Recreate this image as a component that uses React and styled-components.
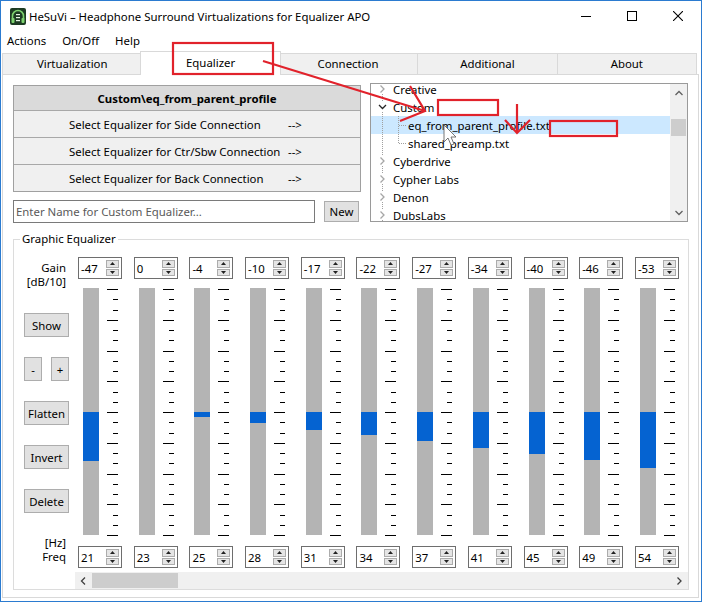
import React from 'react';
import styled, { createGlobalStyle } from 'styled-components';

const GlobalStyle = createGlobalStyle`
  html, body { margin: 0; padding: 0; background: #fff; }
  body { font-family: "Segoe UI", "Noto Sans", sans-serif; font-size: 11.4px; color: #000; }
  * { box-sizing: border-box; }
`;

const Window = styled.div`
  position: relative;
  width: 702px;
  height: 602px;
  border: 1px solid #2b7bd0;
  background: #fff;
  display: flex;
  flex-direction: column;
  overflow: hidden;
`;

const TitleBar = styled.div`
  height: 30px;
  display: flex;
  align-items: center;
  padding-left: 9px;
`;

const TitleText = styled.div`
  flex: 1;
  margin-left: 3px;
  white-space: nowrap;
`;

const CaptionButton = styled.div`
  width: 46px;
  height: 30px;
  display: flex;
  align-items: center;
  justify-content: center;
`;

const MenuBar = styled.div`
  height: 20px;
  display: flex;
  align-items: center;
  padding: 0 0 1px 6px;
  gap: 16px;
`;

const MenuItem = styled.span``;

const TabStrip = styled.div`
  height: 23px;
  display: flex;
  align-items: flex-end;
  padding: 0 4px 0 1px;
`;

const Tab = styled.div`
  flex: 1;
  height: ${p => (p.$active ? '24px' : '21px')};
  margin: ${p => (p.$active ? '0 -2px -1px -2px' : '0 0 0 -1px')};
  padding-bottom: ${p => (p.$active ? '3px' : '2px')};
  background: ${p => (p.$active ? '#fff' : '#f0f0f0')};
  border: 1px solid #d9d9d9;
  border-bottom: none;
  display: flex;
  align-items: center;
  justify-content: center;
  position: relative;
  z-index: ${p => (p.$active ? 2 : 1)};
  &:first-child { margin-left: 0; }
`;

const TabPage = styled.div`
  flex: 1;
  margin: 0 2px 3px 1px;
  border: 1px solid #d9d9d9;
  background: #fff;
  padding: 8px 9px 0 10px;
  display: flex;
  flex-direction: column;
`;

const TopRow = styled.div`
  display: flex;
  height: 139px;
`;

const LeftPanel = styled.div`
  width: 348px;
  display: flex;
  flex-direction: column;
`;

const ProfileBox = styled.div`
  margin: 2px 0 0 0;
  border: 1px solid #a0a0a0;
  display: flex;
  flex-direction: column;
`;

const ProfileHeader = styled.div`
  height: 24px;
  background: #dadada;
  font-weight: 700;
  display: flex;
  align-items: center;
  justify-content: center;
`;

const ProfileRow = styled.div`
  height: 27px;
  border-top: 1px solid #a8a8a8;
  background: #f0f0f0;
  display: grid;
  grid-template-columns: 219px auto;
  align-items: center;
  padding-left: 55px;
  white-space: nowrap;
`;

const InputRow = styled.div`
  display: flex;
  align-items: flex-start;
  margin-top: 8px;
`;

const NameInput = styled.div`
  width: 302px;
  height: 23px;
  border: 1px solid #7a7a7a;
  color: #5a5a5a;
  display: flex;
  align-items: center;
  padding-left: 2px;
  white-space: nowrap;
`;

const PushButton = styled.div`
  width: ${p => p.$w || 45}px;
  height: ${p => p.$h || 24}px;
  margin-top: ${p => p.$mt || 0}px;
  margin-left: ${p => p.$ml || 0}px;
  background: #e1e1e1;
  border: 1px solid #adadad;
  display: flex;
  align-items: center;
  justify-content: center;
  flex-shrink: 0;
`;

const TreeView = styled.div`
  width: 318px;
  margin-left: 9px;
  border: 1px solid #9a9a9a;
  display: flex;
  overflow: hidden;
`;

const TreeList = styled.div`
  flex: 1;
  overflow: hidden;
`;

const TreeInner = styled.div`
  margin-top: -4px;
`;

const TreeRow = styled.div`
  height: 18px;
  display: flex;
  align-items: center;
  white-space: nowrap;
  background: ${p => (p.$selected ? '#cce8ff' : 'transparent')};
`;

const TreeLines = styled.svg`
  flex-shrink: 0;
  display: block;
`;

const TreeLabel = styled.span`
  margin-left: ${p => p.$ml}px;
`;

const VScroll = styled.div`
  width: 17px;
  background: #f0f0f0;
  display: flex;
  flex-direction: column;
  align-items: center;
`;

const ScrollArrowBox = styled.div`
  width: 17px;
  height: 17px;
  display: flex;
  align-items: center;
  justify-content: center;
  flex-shrink: 0;
`;

const VThumb = styled.div`
  width: 15px;
  height: 17px;
  background: #cdcdcd;
  margin-top: ${p => p.$top}px;
`;

const Spacer = styled.div`
  flex: 1;
`;

const GroupBox = styled.div`
  position: relative;
  margin-top: 17px;
  height: 351px;
  border: 1px solid #dcdcdc;
  display: flex;
`;

const GroupTitle = styled.span`
  position: absolute;
  top: -9px;
  left: 6px;
  padding: 0 2px;
  line-height: 16px;
  background: #fff;
`;

const LeftColumn = styled.div`
  width: 61px;
  flex-shrink: 0;
  display: flex;
  flex-direction: column;
  padding-top: 21px;
`;

const AxisLabel = styled.div`
  text-align: right;
  padding-right: 9px;
  height: 14px;
  line-height: 14px;
  margin-top: ${p => p.$mt || 0}px;
`;

const ButtonStack = styled.div`
  display: flex;
  flex-direction: column;
  gap: 20px;
  margin: 24px 0 0 10px;
`;

const PairRow = styled.div`
  display: flex;
  gap: 9px;
`;

const ScrollArea = styled.div`
  flex: 1;
  min-width: 0;
  display: flex;
  flex-direction: column;
  overflow: hidden;
`;

const Columns = styled.div`
  flex: 1;
  display: flex;
  overflow: hidden;
  padding: 17px 0 0 3px;
`;

const Column = styled.div`
  width: 55.7px;
  flex-shrink: 0;
  display: flex;
  flex-direction: column;
`;

const SpinBox = styled.div`
  width: 44px;
  height: 22px;
  border: 1px solid #6e6e6e;
  background: #fff;
  display: flex;
  align-items: center;
  margin-top: ${p => p.$mt || 0}px;
`;

const SpinValue = styled.span`
  flex: 1;
  padding-left: 2px;
`;

const SpinButtons = styled.div`
  width: 13px;
  height: 100%;
  margin-right: 2px;
  padding: 2px 0;
  display: flex;
  flex-direction: column;
  gap: 1px;
`;

const SpinButton = styled.div`
  flex: 1;
  background: #e5e5e5;
  border: 1px solid #acacac;
  display: flex;
  align-items: center;
  justify-content: center;
`;

const SliderRow = styled.div`
  margin-top: 9px;
  height: 248px;
  display: flex;
`;

const Track = styled.div`
  position: relative;
  width: 16px;
  height: 247px;
  margin-left: 5px;
  background: #b4b4b4;
`;

const TrackFill = styled.div`
  position: absolute;
  left: 0;
  right: 0;
  top: 124px;
  background: #0563d1;
`;

const TickSvg = styled.svg`
  display: block;
  margin-left: 7px;
`;

const HScroll = styled.div`
  height: 17px;
  background: #f0f0f0;
  display: flex;
  align-items: center;
`;

const HThumb = styled.div`
  width: 86px;
  height: 15px;
  background: #cdcdcd;
`;

const Overlay = styled.svg`
  position: absolute;
  top: -1px;
  left: -1px;
  pointer-events: none;
  z-index: 10;
`;

const gains = [-47, 0, -4, -10, -17, -22, -27, -34, -40, -46, -53];
const freqs = [21, 23, 25, 28, 31, 34, 37, 41, 45, 49, 54];

const treeItems = [
  { label: 'Creative', level: 0 },
  { label: 'Custom', level: 0, expanded: true },
  { label: 'eq_from_parent_profile.txt', level: 1, selected: true },
  { label: 'shared_preamp.txt', level: 1, last: true },
  { label: 'Cyberdrive', level: 0 },
  { label: 'Cypher Labs', level: 0 },
  { label: 'Denon', level: 0 },
  { label: 'DubsLabs', level: 0 },
];

const AppIcon = () => (
  <svg width="16" height="17" viewBox="0 0 16 17">
    <rect x="0" y="0" width="16" height="17" rx="2" fill="#1d3b23" />
    <path d="M2.5 11 V8 A5.5 5.5 0 0 1 13.5 8 V11" fill="none" stroke="#7ed36f" strokeWidth="1.6" />
    <rect x="1.5" y="10" width="3" height="5" rx="1" fill="#7ed36f" />
    <rect x="11.5" y="10" width="3" height="5" rx="1" fill="#7ed36f" />
    <rect x="6" y="6" width="4" height="1.2" fill="#e8f5e4" />
    <rect x="6" y="9" width="4" height="1.2" fill="#e8f5e4" />
    <rect x="6" y="12" width="4" height="1.2" fill="#e8f5e4" />
  </svg>
);

const Tri = ({ up }) => (
  <svg width="5" height="3" viewBox="0 0 5 3">
    <path d={up ? 'M0 3 L2.5 0 L5 3 Z' : 'M0 0 L5 0 L2.5 3 Z'} fill="#222" />
  </svg>
);

const Spinner = ({ value, mt }) => (
  <SpinBox $mt={mt}>
    <SpinValue>{value}</SpinValue>
    <SpinButtons>
      <SpinButton><Tri up /></SpinButton>
      <SpinButton><Tri /></SpinButton>
    </SpinButtons>
  </SpinBox>
);

const Ticks = () => {
  const items = [];
  for (let i = 0; i <= 24; i++) {
    const y = Math.round(1 + i * 10.25) + 0.5;
    const long = i % 3 === 0;
    items.push(<line key={i} x1={long ? 1 : 7} x2="12" y1={y} y2={y} stroke="#000" strokeWidth="1" />);
  }
  return (
    <TickSvg width="13" height="248" viewBox="0 0 13 248">{items}</TickSvg>
  );
};

const Chevron = ({ dir, color }) => {
  const d = {
    right: 'M1.5 0.5 L5 4 L1.5 7.5',
    down: 'M0.5 2 L4 5.5 L7.5 2',
    left: 'M5 0.5 L1.5 4 L5 7.5',
    up: 'M0.5 6 L4 2.5 L7.5 6',
  }[dir];
  const vertical = dir === 'down' || dir === 'up';
  return (
    <svg width={vertical ? 8 : 7} height={8} viewBox={vertical ? '0 0 8 8' : '0 0 7 8'}>
      <path d={d} fill="none" stroke={color} strokeWidth="1.3" />
    </svg>
  );
};

const TreeItem = ({ item }) => {
  if (item.level === 0) {
    return (
      <TreeRow>
        <TreeLines width="19" height="18" viewBox="0 0 19 18">
          <line x1="11.5" y1="0" x2="11.5" y2="4" stroke="#a0a0a0" strokeDasharray="1 1" />
          <line x1="11.5" y1="14" x2="11.5" y2="18" stroke="#a0a0a0" strokeDasharray="1 1" />
          <g transform={item.expanded ? 'translate(7.5,5)' : 'translate(8,5)'}>
            {item.expanded ? (
              <path d="M0.5 2 L4 5.5 L7.5 2" fill="none" stroke="#262626" strokeWidth="1.3" />
            ) : (
              <path d="M1.5 0.5 L5 4 L1.5 7.5" fill="none" stroke="#a6a6a6" strokeWidth="1.3" />
            )}
          </g>
        </TreeLines>
        <TreeLabel $ml={3}>{item.label}</TreeLabel>
      </TreeRow>
    );
  }
  return (
    <TreeRow $selected={item.selected}>
      <TreeLines width="35" height="18" viewBox="0 0 35 18">
        <line x1="11.5" y1="0" x2="11.5" y2="18" stroke="#a0a0a0" strokeDasharray="1 1" />
        <line x1="27.5" y1="0" x2="27.5" y2={item.last ? 9 : 18} stroke="#a0a0a0" strokeDasharray="1 1" />
        <line x1="28" y1="9.5" x2="35" y2="9.5" stroke="#a0a0a0" strokeDasharray="1 1" />
      </TreeLines>
      <TreeLabel $ml={2}>{item.label}</TreeLabel>
    </TreeRow>
  );
};

const red = '#e1222b';

export default function App() {
  return (
    <>
      <GlobalStyle />
      <Window>
        <TitleBar>
          <AppIcon />
          <TitleText>HeSuVi – Headphone Surround Virtualizations for Equalizer APO</TitleText>
          <CaptionButton>
            <svg width="10" height="1"><rect width="10" height="1" fill="#000" /></svg>
          </CaptionButton>
          <CaptionButton>
            <svg width="10" height="10"><rect x="0.5" y="0.5" width="9" height="9" fill="none" stroke="#000" /></svg>
          </CaptionButton>
          <CaptionButton>
            <svg width="10" height="10"><path d="M0 0 L10 10 M10 0 L0 10" stroke="#000" strokeWidth="1.1" /></svg>
          </CaptionButton>
        </TitleBar>
        <MenuBar>
          <MenuItem>Actions</MenuItem>
          <MenuItem>On/Off</MenuItem>
          <MenuItem>Help</MenuItem>
        </MenuBar>
        <TabStrip>
          <Tab>Virtualization</Tab>
          <Tab $active>Equalizer</Tab>
          <Tab>Connection</Tab>
          <Tab>Additional</Tab>
          <Tab>About</Tab>
        </TabStrip>
        <TabPage>
          <TopRow>
            <LeftPanel>
              <ProfileBox>
                <ProfileHeader>Custom\eq_from_parent_profile</ProfileHeader>
                <ProfileRow><span>Select Equalizer for Side Connection</span><span>--&gt;</span></ProfileRow>
                <ProfileRow><span>Select Equalizer for Ctr/Sbw Connection</span><span>--&gt;</span></ProfileRow>
                <ProfileRow><span>Select Equalizer for Back Connection</span><span>--&gt;</span></ProfileRow>
              </ProfileBox>
              <InputRow>
                <NameInput>Enter Name for Custom Equalizer...</NameInput>
                <PushButton $w={35} $h={21} $mt={1} $ml={9}>New</PushButton>
              </InputRow>
            </LeftPanel>
            <TreeView>
              <TreeList>
                <TreeInner>
                  {treeItems.map(it => <TreeItem key={it.label} item={it} />)}
                </TreeInner>
              </TreeList>
              <VScroll>
                <ScrollArrowBox><Chevron dir="up" color="#606060" /></ScrollArrowBox>
                <VThumb $top={18} />
                <Spacer />
                <ScrollArrowBox><Chevron dir="down" color="#606060" /></ScrollArrowBox>
              </VScroll>
            </TreeView>
          </TopRow>
          <GroupBox>
            <GroupTitle>Graphic Equalizer</GroupTitle>
            <LeftColumn>
              <AxisLabel>Gain</AxisLabel>
              <AxisLabel>[dB/10]</AxisLabel>
              <ButtonStack>
                <PushButton>Show</PushButton>
                <PairRow>
                  <PushButton $w={18}>-</PushButton>
                  <PushButton $w={18}>+</PushButton>
                </PairRow>
                <PushButton>Flatten</PushButton>
                <PushButton>Invert</PushButton>
                <PushButton>Delete</PushButton>
              </ButtonStack>
              <AxisLabel $mt={23}>[Hz]</AxisLabel>
              <AxisLabel>Freq</AxisLabel>
            </LeftColumn>
            <ScrollArea>
              <Columns>
                {gains.map((g, i) => (
                  <Column key={i}>
                    <Spinner value={g} />
                    <SliderRow>
                      <Track>
                        {g < 0 && <TrackFill style={{ height: Math.ceil(-g * 1.04) }} />}
                      </Track>
                      <Ticks />
                    </SliderRow>
                    <Spinner value={freqs[i]} mt={10} />
                  </Column>
                ))}
              </Columns>
              <HScroll>
                <ScrollArrowBox><Chevron dir="left" color="#404040" /></ScrollArrowBox>
                <HThumb />
                <Spacer />
                <ScrollArrowBox><Chevron dir="right" color="#404040" /></ScrollArrowBox>
              </HScroll>
            </ScrollArea>
          </GroupBox>
        </TabPage>
        <Overlay width="702" height="602" viewBox="0 0 702 602">
          <g fill="none" stroke={red} strokeWidth="2.2">
            <rect x="173" y="43" width="100" height="31" />
            <line x1="263" y1="61" x2="425" y2="111" />
            <polyline points="410,86 425,111 400,121" />
            <rect x="438" y="100" width="60" height="15" />
            <line x1="517" y1="104" x2="517" y2="133" />
            <polyline points="505,120 517,133 530,120" />
            <rect x="550" y="121" width="67" height="15" />
          </g>
          <path d="M444 125 L444 142 L448 138 L451 145 L454 144 L451 137 L456 137 Z" fill="#fff" stroke="#666" strokeWidth="0.9" />
        </Overlay>
      </Window>
    </>
  );
}
